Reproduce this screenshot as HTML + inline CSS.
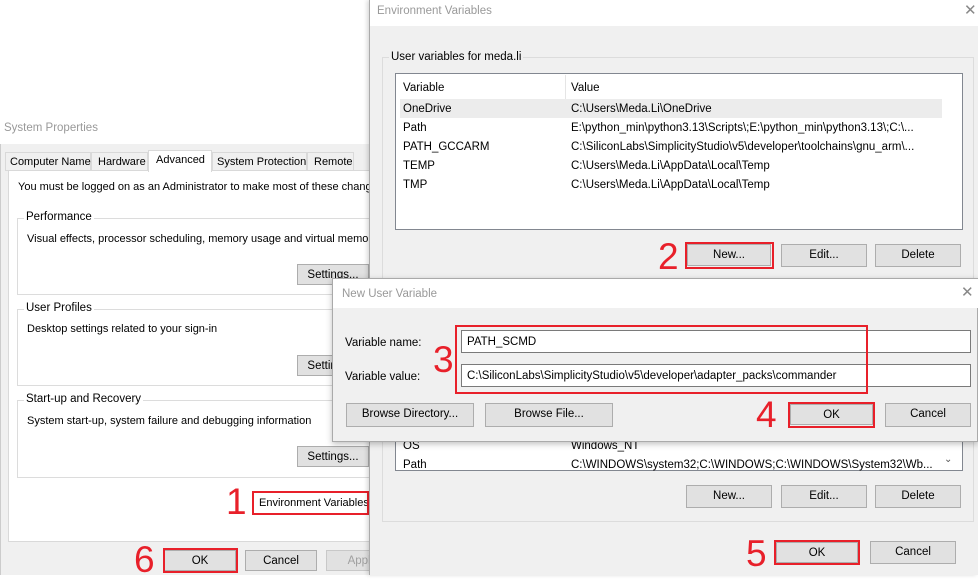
<!DOCTYPE html>
<html><head><meta charset="utf-8"><style>
*{box-sizing:border-box;margin:0;padding:0}
body{width:978px;height:575px;position:relative;overflow:hidden;background:#fff;font-family:"Liberation Sans",sans-serif;font-size:11.5px;color:#000}
.a{position:absolute}
.btn{position:absolute;background:#e1e1e1;border:1px solid #adadad;text-align:center;font-size:11.5px;line-height:21px;white-space:nowrap;overflow:hidden}
.red{position:absolute;border:2px solid #e8202a}
.num{position:absolute;color:#e8202a;font-size:37px;font-family:"Liberation Sans",sans-serif;line-height:1}
.gb{position:absolute;border:1px solid #dcdcdc}
.gl{position:absolute;background:#f0f0f0;padding:0 2px;white-space:nowrap;margin-top:1px}
.t{position:absolute;white-space:nowrap;margin-top:1px}
.tab{position:absolute;white-space:nowrap;font-size:11px;margin-top:1px}
.x{position:absolute;color:#888;font-size:15px;font-weight:normal}
</style></head><body>

<!-- System Properties -->
<div class="a" style="left:0;top:112px;width:372px;height:463px;background:#f0f0f0;border-left:1px solid #ccc"></div>
<div class="a" style="left:0;top:112px;width:372px;height:32px;background:#fff"></div>
<div class="t" style="left:4px;top:121px;color:#999">System Properties</div>
<div class="a" style="left:8px;top:170px;width:364px;height:372px;background:#fff;border:1px solid #d9d9d9"></div>
<div class="a" style="left:5px;top:152px;width:86px;height:19px;border:1px solid #d9d9d9;background:#f0f0f0"></div><div class="tab" style="left:10px;top:155px">Computer Name</div>
<div class="a" style="left:91px;top:152px;width:57px;height:19px;border:1px solid #d9d9d9;background:#f0f0f0"></div><div class="tab" style="left:98px;top:155px">Hardware</div>
<div class="a" style="left:148px;top:150px;width:64px;height:22px;border:1px solid #d9d9d9;border-bottom:none;background:#fff"></div><div class="tab" style="left:156px;top:153px">Advanced</div>
<div class="a" style="left:212px;top:152px;width:95px;height:19px;border:1px solid #d9d9d9;background:#f0f0f0"></div><div class="tab" style="left:217px;top:155px">System Protection</div>
<div class="a" style="left:307px;top:152px;width:47px;height:19px;border:1px solid #d9d9d9;background:#f0f0f0"></div><div class="tab" style="left:314px;top:155px">Remote</div>
<div class="t" style="left:18px;top:180px;font-size:11px">You must be logged on as an Administrator to make most of these changes.</div>

<div class="gb" style="left:17px;top:218px;width:360px;height:77px"></div><div class="gl" style="left:24px;top:210px;background:#fff">Performance</div>
<div class="t" style="left:27px;top:232px;font-size:11px">Visual effects, processor scheduling, memory usage and virtual memory</div>
<div class="btn" style="left:297px;top:264px;width:72px;height:21px">Settings...</div>

<div class="gb" style="left:17px;top:309px;width:360px;height:77px"></div><div class="gl" style="left:24px;top:301px;background:#fff">User Profiles</div>
<div class="t" style="left:27px;top:322px;font-size:11px">Desktop settings related to your sign-in</div>
<div class="btn" style="left:297px;top:355px;width:72px;height:21px">Settings...</div>

<div class="gb" style="left:17px;top:400px;width:360px;height:78px"></div><div class="gl" style="left:24px;top:392px;background:#fff">Start-up and Recovery</div>
<div class="t" style="left:27px;top:414px;font-size:11px">System start-up, system failure and debugging information</div>
<div class="btn" style="left:297px;top:446px;width:72px;height:21px">Settings...</div>

<div class="t" style="left:259px;top:496px;font-size:11px">Environment Variables...</div>
<div class="red" style="left:252px;top:491px;width:117px;height:24px"></div>
<div class="num" style="left:226px;top:483px">1</div>

<div class="btn" style="left:164px;top:550px;width:72px;height:21px">OK</div>
<div class="red" style="left:163px;top:548px;width:75px;height:25px"></div>
<div class="num" style="left:134px;top:541px">6</div>
<div class="btn" style="left:245px;top:550px;width:72px;height:21px">Cancel</div>
<div class="btn" style="left:326px;top:550px;width:72px;height:21px;color:#a0a0a0;border-color:#c8c8c8">Apply</div>

<!-- Environment Variables -->
<div class="a" style="left:369px;top:0;width:609px;height:575px;background:#f0f0f0;border-left:1px solid #aaa;box-shadow:-2px 0 4px rgba(0,0,0,.15)"></div>
<div class="a" style="left:370px;top:0;width:608px;height:26px;background:#fff"></div>
<div class="t" style="left:377px;top:4px;color:#999">Environment Variables</div>
<div class="x" style="left:964px;top:1px">✕</div>

<div class="gb" style="left:382px;top:57px;width:592px;height:230px"></div><div class="gl" style="left:389px;top:50px">User variables for meda.li</div>
<div class="a" style="left:395px;top:73px;width:568px;height:157px;background:#fff;border:1px solid #828790"></div>
<div class="a" style="left:565px;top:75px;width:1px;height:24px;background:#e5e5e5"></div>
<div class="t" style="left:403px;top:81px">Variable</div><div class="t" style="left:571px;top:81px">Value</div>
<div class="a" style="left:400px;top:99px;width:542px;height:19px;background:#ececec"></div>
<div class="t" style="left:403px;top:102px">OneDrive</div><div class="t" style="left:571px;top:102px">C:\Users\Meda.Li\OneDrive</div>
<div class="t" style="left:403px;top:121px">Path</div><div class="t" style="left:571px;top:121px">E:\python_min\python3.13\Scripts\;E:\python_min\python3.13\;C:\...</div>
<div class="t" style="left:403px;top:140px">PATH_GCCARM</div><div class="t" style="left:571px;top:140px">C:\SiliconLabs\SimplicityStudio\v5\developer\toolchains\gnu_arm\...</div>
<div class="t" style="left:403px;top:159px">TEMP</div><div class="t" style="left:571px;top:159px">C:\Users\Meda.Li\AppData\Local\Temp</div>
<div class="t" style="left:403px;top:178px">TMP</div><div class="t" style="left:571px;top:178px">C:\Users\Meda.Li\AppData\Local\Temp</div>
<div class="btn" style="left:687px;top:244px;width:84px;height:22px">New...</div>
<div class="red" style="left:685px;top:242px;width:89px;height:27px"></div>
<div class="num" style="left:658px;top:238px">2</div>
<div class="btn" style="left:781px;top:244px;width:86px;height:23px">Edit...</div>
<div class="btn" style="left:875px;top:244px;width:86px;height:23px">Delete</div>

<div class="gb" style="left:382px;top:290px;width:592px;height:232px"></div>
<div class="a" style="left:395px;top:430px;width:568px;height:41px;background:#fff;border:1px solid #828790;border-top:none"></div>
<div class="t" style="left:403px;top:439px">OS</div><div class="t" style="left:571px;top:439px">Windows_NT</div>
<div class="t" style="left:403px;top:458px;height:12px;overflow:hidden">Path</div><div class="t" style="left:571px;top:458px;height:12px;overflow:hidden">C:\WINDOWS\system32;C:\WINDOWS;C:\WINDOWS\System32\Wb...</div>
<div class="t" style="left:944px;top:453px;color:#555;font-size:10px">⌄</div>
<div class="btn" style="left:686px;top:485px;width:86px;height:23px">New...</div>
<div class="btn" style="left:781px;top:485px;width:86px;height:23px">Edit...</div>
<div class="btn" style="left:875px;top:485px;width:86px;height:23px">Delete</div>

<div class="btn" style="left:776px;top:542px;width:82px;height:21px">OK</div>
<div class="red" style="left:774px;top:540px;width:86px;height:25px"></div>
<div class="num" style="left:746px;top:535px">5</div>
<div class="btn" style="left:870px;top:541px;width:86px;height:23px">Cancel</div>

<!-- New User Variable -->
<div class="a" style="left:332px;top:278px;width:646px;height:164px;background:#f0f0f0;border:1px solid #aaa;box-shadow:0 2px 6px rgba(0,0,0,.25)"></div>
<div class="a" style="left:333px;top:279px;width:645px;height:29px;background:#fff"></div>
<div class="t" style="left:342px;top:287px;color:#999">New User Variable</div>
<div class="x" style="left:961px;top:283px">✕</div>
<div class="t" style="left:345px;top:336px">Variable name:</div>
<div class="t" style="left:345px;top:370px">Variable value:</div>
<div class="a" style="left:461px;top:330px;width:510px;height:23px;background:#fff;border:1px solid #7a7a7a"></div>
<div class="t" style="left:467px;top:335px">PATH_SCMD</div>
<div class="a" style="left:461px;top:364px;width:510px;height:23px;background:#fff;border:1px solid #7a7a7a"></div>
<div class="t" style="left:467px;top:369px">C:\SiliconLabs\SimplicityStudio\v5\developer\adapter_packs\commander</div>
<div class="red" style="left:455px;top:325px;width:413px;height:69px"></div>
<div class="num" style="left:433px;top:341px">3</div>
<div class="btn" style="left:346px;top:403px;width:128px;height:24px">Browse Directory...</div>
<div class="btn" style="left:485px;top:403px;width:128px;height:24px">Browse File...</div>
<div class="btn" style="left:790px;top:404px;width:83px;height:21px">OK</div>
<div class="red" style="left:788px;top:402px;width:87px;height:26px"></div>
<div class="num" style="left:756px;top:396px">4</div>
<div class="btn" style="left:885px;top:403px;width:86px;height:24px">Cancel</div>
</body></html>
